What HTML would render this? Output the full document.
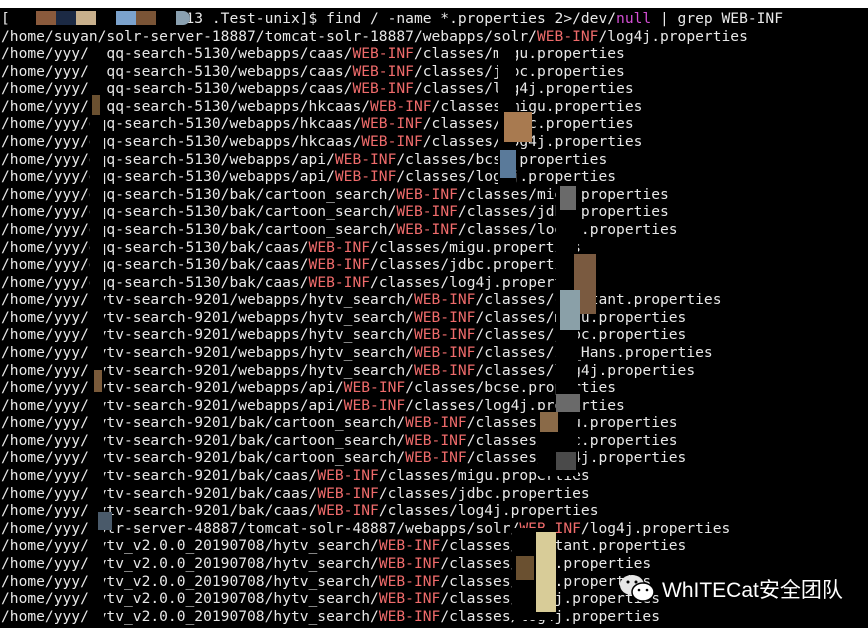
<!DOCTYPE html>
<html><head><meta charset="utf-8"><style>
html,body{margin:0;padding:0;background:#000;width:868px;height:628px;overflow:hidden}
.top{position:absolute;left:0;top:0;width:868px;height:8px;background:#fff}
pre{position:absolute;left:1px;top:10px;margin:0;font-family:"DejaVu Sans Mono","Liberation Mono",monospace;font-size:14.6px;line-height:17.58px;color:#e8e8e8;white-space:pre}
.r{color:#ef6b6b}.m{color:#d44fd4}
.b{position:absolute}
.wm{position:absolute;left:662px;top:574px;font-family:"Liberation Sans","Noto Sans CJK SC",sans-serif;font-size:21px;color:#fff}
</style></head><body>
<div class="top"></div>
<pre>[                    13 .Test-unix]$ find / -name *.properties 2&gt;/dev/<span class="m">null</span> | grep WEB-INF
/home/suyan/solr-server-18887/tomcat-solr-18887/webapps/solr/<span class="r">WEB-INF</span>/log4j.properties
/home/yyy/  qq-search-5130/webapps/caas/<span class="r">WEB-INF</span>/classes/migu.properties
/home/yyy/  qq-search-5130/webapps/caas/<span class="r">WEB-INF</span>/classes/jdbc.properties
/home/yyy/  qq-search-5130/webapps/caas/<span class="r">WEB-INF</span>/classes/log4j.properties
/home/yyy/  qq-search-5130/webapps/hkcaas/<span class="r">WEB-INF</span>/classes/migu.properties
/home/yyy/dqq-search-5130/webapps/hkcaas/<span class="r">WEB-INF</span>/classes/jdbc.properties
/home/yyy/dqq-search-5130/webapps/hkcaas/<span class="r">WEB-INF</span>/classes/log4j.properties
/home/yyy/dqq-search-5130/webapps/api/<span class="r">WEB-INF</span>/classes/bcse.properties
/home/yyy/dqq-search-5130/webapps/api/<span class="r">WEB-INF</span>/classes/log4j.properties
/home/yyy/dqq-search-5130/bak/cartoon_search/<span class="r">WEB-INF</span>/classes/migu.properties
/home/yyy/dqq-search-5130/bak/cartoon_search/<span class="r">WEB-INF</span>/classes/jdbc.properties
/home/yyy/dqq-search-5130/bak/cartoon_search/<span class="r">WEB-INF</span>/classes/log4j.properties
/home/yyy/dqq-search-5130/bak/caas/<span class="r">WEB-INF</span>/classes/migu.properties
/home/yyy/dqq-search-5130/bak/caas/<span class="r">WEB-INF</span>/classes/jdbc.properties
/home/yyy/dqq-search-5130/bak/caas/<span class="r">WEB-INF</span>/classes/log4j.properties
/home/yyy/hytv-search-9201/webapps/hytv_search/<span class="r">WEB-INF</span>/classes/constant.properties
/home/yyy/hytv-search-9201/webapps/hytv_search/<span class="r">WEB-INF</span>/classes/migu.properties
/home/yyy/hytv-search-9201/webapps/hytv_search/<span class="r">WEB-INF</span>/classes/jdbc.properties
/home/yyy/hytv-search-9201/webapps/hytv_search/<span class="r">WEB-INF</span>/classes/zh_Hans.properties
/home/yyy/hytv-search-9201/webapps/hytv_search/<span class="r">WEB-INF</span>/classes/log4j.properties
/home/yyy/hytv-search-9201/webapps/api/<span class="r">WEB-INF</span>/classes/bcse.properties
/home/yyy/hytv-search-9201/webapps/api/<span class="r">WEB-INF</span>/classes/log4j.properties
/home/yyy/hytv-search-9201/bak/cartoon_search/<span class="r">WEB-INF</span>/classes/migu.properties
/home/yyy/hytv-search-9201/bak/cartoon_search/<span class="r">WEB-INF</span>/classes/jdbc.properties
/home/yyy/hytv-search-9201/bak/cartoon_search/<span class="r">WEB-INF</span>/classes/log4j.properties
/home/yyy/hytv-search-9201/bak/caas/<span class="r">WEB-INF</span>/classes/migu.properties
/home/yyy/hytv-search-9201/bak/caas/<span class="r">WEB-INF</span>/classes/jdbc.properties
/home/yyy/hytv-search-9201/bak/caas/<span class="r">WEB-INF</span>/classes/log4j.properties
/home/yyy/solr-server-48887/tomcat-solr-48887/webapps/solr/<span class="r">WEB-INF</span>/log4j.properties
/home/yyy/hytv_v2.0.0_20190708/hytv_search/<span class="r">WEB-INF</span>/classes/constant.properties
/home/yyy/hytv_v2.0.0_20190708/hytv_search/<span class="r">WEB-INF</span>/classes/migu.properties
/home/yyy/hytv_v2.0.0_20190708/hytv_search/<span class="r">WEB-INF</span>/classes/jdbc.properties
/home/yyy/hytv_v2.0.0_20190708/hytv_search/<span class="r">WEB-INF</span>/classes/log4j.properties
/home/yyy/hytv_v2.0.0_20190708/hytv_search/<span class="r">WEB-INF</span>/classes/log4j.properties</pre>
<div class="b" style="left:10px;top:9px;width:180px;height:17px;background:#000;border-radius:0 9px 9px 0"></div>
<div class="b" style="left:36px;top:11px;width:20px;height:14px;background:#8a5a3c"></div>
<div class="b" style="left:56px;top:11px;width:20px;height:14px;background:#1c2a44"></div>
<div class="b" style="left:76px;top:11px;width:20px;height:14px;background:#c8b08c"></div>
<div class="b" style="left:116px;top:11px;width:20px;height:14px;background:#7ba2cc"></div>
<div class="b" style="left:136px;top:11px;width:20px;height:14px;background:#7a5436"></div>
<div class="b" style="left:176px;top:11px;width:14px;height:14px;background:#8aa0b0;border-radius:0 7px 7px 0"></div>
<div class="b" style="left:90px;top:44px;width:14px;height:584px;background:#000"></div>
<div class="b" style="left:92px;top:95px;width:8px;height:20px;background:#6a5030"></div>
<div class="b" style="left:94px;top:370px;width:8px;height:22px;background:#7a5a3a"></div>
<div class="b" style="left:98px;top:512px;width:14px;height:18px;background:#4a5a6a"></div>
<div class="b" style="left:498px;top:44px;width:18px;height:140px;background:#000"></div>
<div class="b" style="left:504px;top:112px;width:28px;height:30px;background:#a87a50"></div>
<div class="b" style="left:500px;top:150px;width:16px;height:28px;background:#5a7a9a"></div>
<div class="b" style="left:556px;top:184px;width:22px;height:230px;background:#000"></div>
<div class="b" style="left:560px;top:186px;width:16px;height:24px;background:#6a6a6a"></div>
<div class="b" style="left:574px;top:254px;width:22px;height:60px;background:#7a5a40"></div>
<div class="b" style="left:560px;top:290px;width:20px;height:40px;background:#8aa0a8"></div>
<div class="b" style="left:538px;top:410px;width:40px;height:66px;background:#000"></div>
<div class="b" style="left:556px;top:394px;width:24px;height:18px;background:#6a6a6a"></div>
<div class="b" style="left:540px;top:412px;width:18px;height:20px;background:#8a6a48"></div>
<div class="b" style="left:556px;top:452px;width:20px;height:18px;background:#4a4a4a"></div>
<div class="b" style="left:512px;top:528px;width:44px;height:92px;background:#000"></div>
<div class="b" style="left:536px;top:532px;width:20px;height:80px;background:#d8cc98"></div>
<div class="b" style="left:516px;top:556px;width:18px;height:24px;background:#6a5030"></div>
<div class="wm"><svg width="40" height="32" viewBox="0 0 40 32" style="position:absolute;left:-44px;top:-2px"><ellipse cx="14" cy="13" rx="12" ry="10" fill="#e6e6e6"/><ellipse cx="25" cy="20" rx="11" ry="9" fill="#fff" stroke="#000" stroke-width="1.5"/><circle cx="10" cy="10" r="1.5" fill="#000"/><circle cx="18" cy="10" r="1.5" fill="#000"/><circle cx="21" cy="18" r="1.3" fill="#000"/><circle cx="29" cy="18" r="1.3" fill="#000"/></svg>WhITECat安全团队</div>
</body></html>
